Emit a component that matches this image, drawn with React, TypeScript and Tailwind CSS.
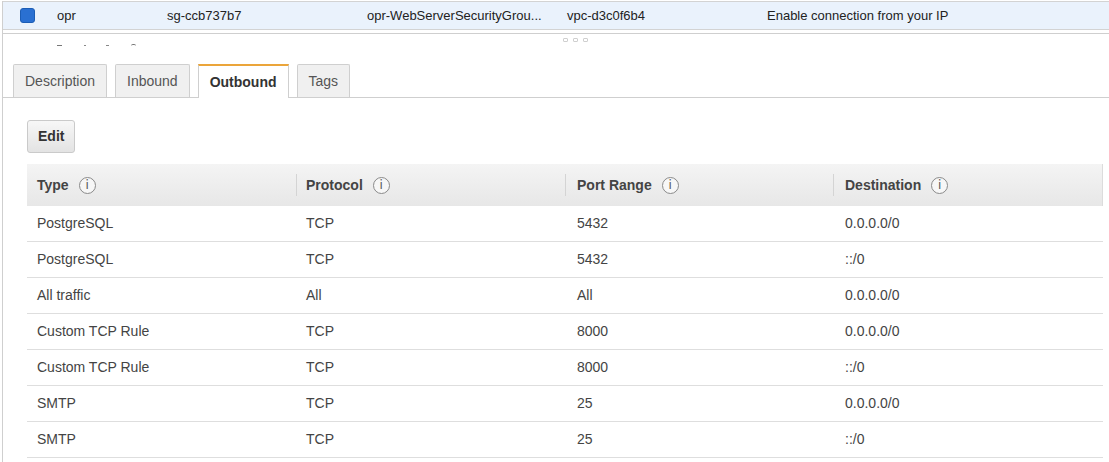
import React from 'react';

const rules: string[][] = [
  ['PostgreSQL', 'TCP', '5432', '0.0.0.0/0'],
  ['PostgreSQL', 'TCP', '5432', '::/0'],
  ['All traffic', 'All', 'All', '0.0.0.0/0'],
  ['Custom TCP Rule', 'TCP', '8000', '0.0.0.0/0'],
  ['Custom TCP Rule', 'TCP', '8000', '::/0'],
  ['SMTP', 'TCP', '25', '0.0.0.0/0'],
  ['SMTP', 'TCP', '25', '::/0'],
];

const headers = ['Type', 'Protocol', 'Port Range', 'Destination'];
const cellPad = ['pl-[10px]', 'pl-[10px]', 'pl-[12px]', 'pl-[12px]'];

const Info: React.FC = () => (
  <span className="ml-[10px] inline-flex h-[17px] w-[17px] items-center justify-center rounded-full border border-[#8a8a8a] bg-[#f7f7f7] text-[12px] font-normal leading-none text-[#555] font-['DejaVu_Sans',sans-serif]">
    i
  </span>
);

const Tab: React.FC<{ label: string; active?: boolean }> = ({ label, active }) =>
  active ? (
    <div className="-mb-px flex h-[34px] items-center border-x border-t-2 border-x-[#cfcfcf] border-t-[#eba53a] bg-white px-[11px] text-[14px] font-bold text-[#333]">
      {label}
    </div>
  ) : (
    <div className="flex h-[33px] items-center rounded-t-[2px] border-x border-t border-[#cfcfcf] bg-[#f0f0f0] px-[11px] text-[14px] text-[#555]">
      {label}
    </div>
  );

const App: React.FC = () => {
  return (
    <div className="h-[462px] w-[1109px] overflow-hidden bg-white font-['Liberation_Sans',Arial,sans-serif]">
      <div className="ml-[2px] h-full border-l border-[#cfcfcf]">
        {/* selected security group row */}
        <div className="mt-[1px] flex h-[29px] items-center border-y border-[#d3d3d3] bg-[#eaf2fc] text-[13px] text-[#222]">
          <div className="w-[54px] pl-[17px]">
            <div className="h-[15px] w-[15px] rounded-[3px] border border-[#1c5db5] bg-[#2a70d2]" />
          </div>
          <div className="w-[110px]">opr</div>
          <div className="w-[200px]">sg-ccb737b7</div>
          <div className="w-[200px]">opr-WebServerSecurityGrou...</div>
          <div className="w-[200px]">vpc-d3c0f6b4</div>
          <div>Enable connection from your IP</div>
        </div>
        <div className="mt-[3px] border-t border-[#cfcfcf]" />

        {/* splitter area */}
        <div className="h-[30px]">
          <div className="flex gap-[5px] pl-[560px] pt-[4px]">
            <span className="h-[4px] w-[5px] rounded-[1px] border border-[#cfcfcf]" />
            <span className="h-[4px] w-[5px] rounded-[1px] border border-[#cfcfcf]" />
            <span className="h-[4px] w-[5px] rounded-[1px] border border-[#cfcfcf]" />
          </div>
          <div className="flex items-center pl-[54px] pt-[2px]">
            <span className="h-[1px] w-[5px] bg-[#777]" />
            <span className="ml-[22px] h-[1px] w-[2px] bg-[#888]" />
            <span className="ml-[20px] h-[1px] w-[3px] bg-[#888]" />
            <span className="ml-[22px] h-[2px] w-[5px] rounded-t-full border-t border-[#777]" />
          </div>
        </div>

        {/* tabs */}
        <div className="flex items-end gap-[8px] border-b border-[#cfcfcf] pl-[10px]">
          <Tab label="Description" />
          <Tab label="Inbound" />
          <Tab label="Outbound" active />
          <Tab label="Tags" />
        </div>

        {/* outbound panel */}
        <div className="pl-[24px] pt-[22px]">
          <button className="flex h-[33px] items-center rounded-[3px] border border-[#cacaca] bg-gradient-to-b from-[#f7f7f7] to-[#e3e3e3] px-[10px] text-[14px] font-bold text-[#333]">
            Edit
          </button>

          <div className="mt-[11px] w-[1076px]">
            <div className="grid h-[42px] grid-cols-[269px_269px_268px_270px] border-r border-[#dcdcdc] bg-gradient-to-b from-[#f4f4f4] to-[#e7e7e7] text-[14px] font-bold text-[#444]">
              {headers.map((h, i) => (
                <div key={h} className="flex items-center">
                  {i > 0 && <span className="h-[22px] w-px bg-[#d4d4d4]" />}
                  <span className={`flex items-center ${i === 0 ? 'pl-[10px]' : i === 1 ? 'pl-[9px]' : 'pl-[11px]'}`}>
                    {h}
                    <Info />
                  </span>
                </div>
              ))}
            </div>
            {rules.map((row, r) => (
              <div
                key={r}
                className="grid h-[36px] grid-cols-[269px_269px_268px_270px] border-b border-[#dedede] text-[14px] text-[#444]"
              >
                {row.map((c, i) => (
                  <div key={i} className={`flex items-center ${cellPad[i]}`}>
                    {c}
                  </div>
                ))}
              </div>
            ))}
          </div>
        </div>
      </div>
    </div>
  );
};

export default App;
